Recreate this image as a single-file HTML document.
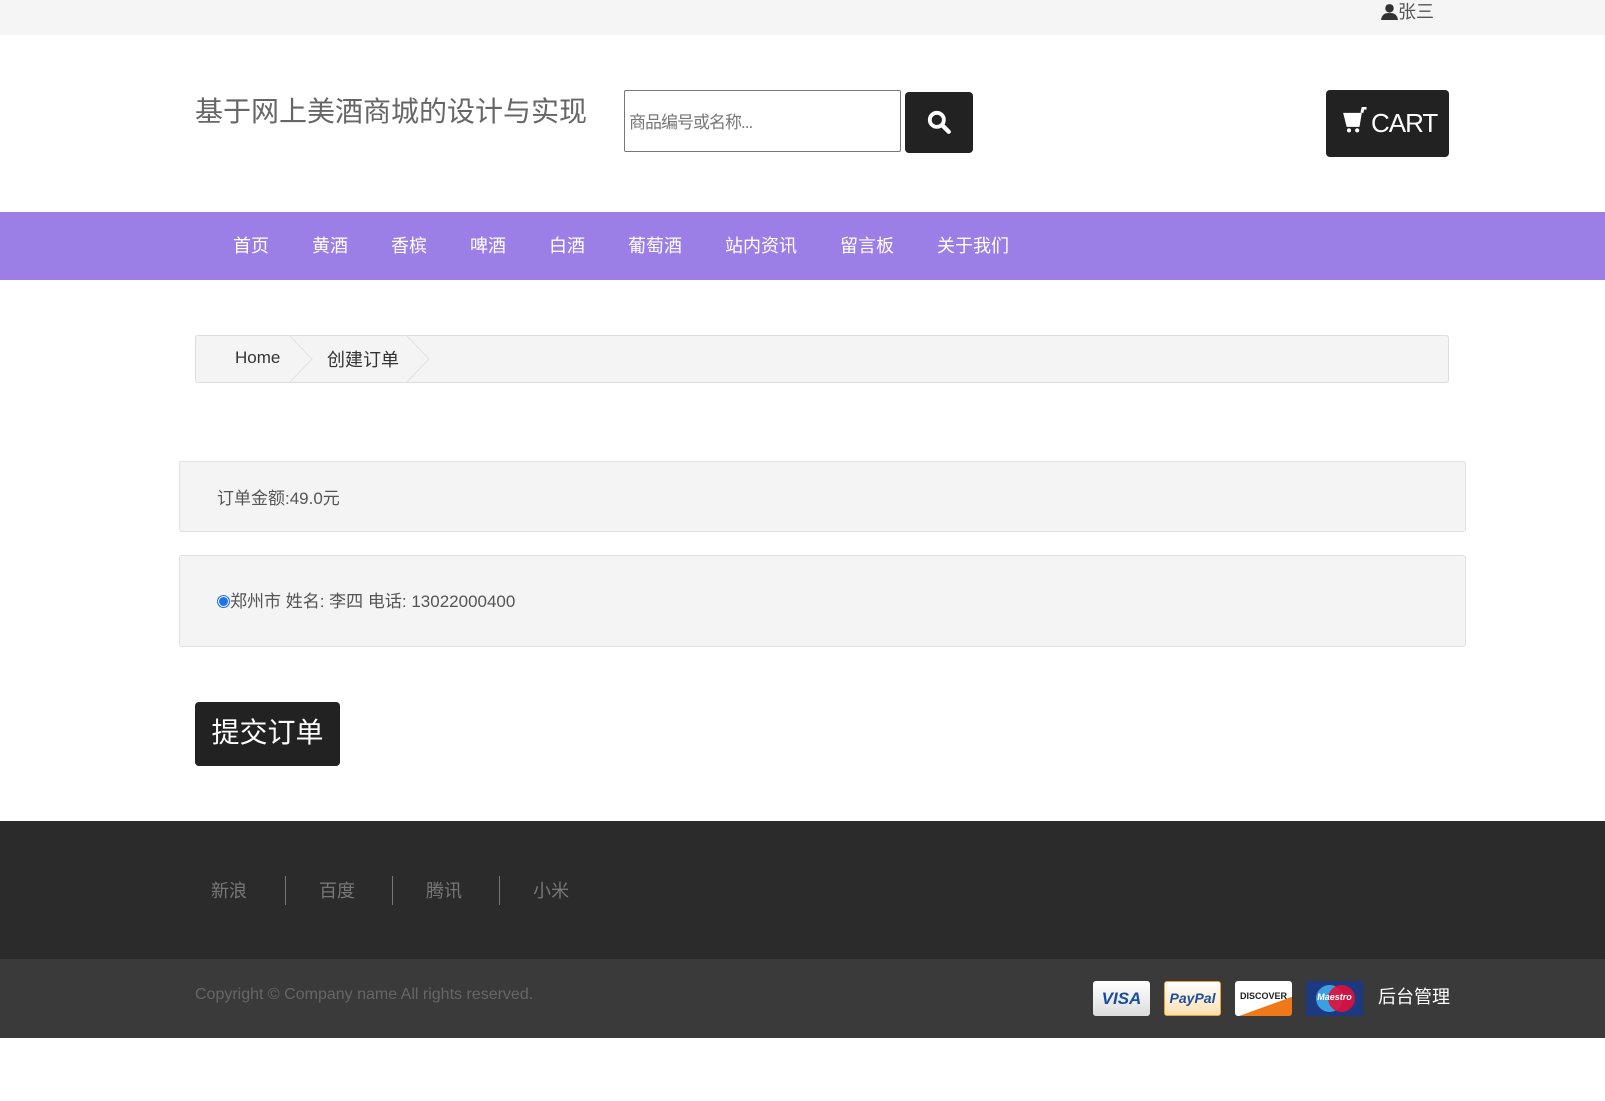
<!DOCTYPE html>
<html><head><meta charset="utf-8"><style>
*{margin:0;padding:0;box-sizing:border-box}
body{width:1605px;height:1101px;position:relative;background:#fff;font-family:"Liberation Sans","Noto Sans CJK SC",sans-serif;overflow:hidden}
.a{position:absolute}
</style></head><body>
<div class="a" style="left:0;top:0;width:1605px;height:35px;background:#f5f5f5"></div>
<div class="a" style="left:1381px;top:1px;font-size:18px;color:#555;line-height:22px">
<svg width="17" height="17" viewBox="0 0 16 16" style="vertical-align:-2px"><circle cx="8" cy="5" r="4" fill="#333"/><path d="M0 16 Q1 9 8 9.5 Q15 9 16 16Z" fill="#333"/></svg>张三</div>

<div class="a" style="left:195px;top:90px;font-size:28px;color:#666;letter-spacing:0">基于网上美酒商城的设计与实现</div>
<div class="a" style="left:624px;top:90px;width:277px;height:62px;border:1px solid #777;border-radius:2px;font-size:17px;color:#777;padding:17px 4px;letter-spacing:-1px">商品编号或名称...</div>
<div class="a" style="left:905px;top:92px;width:68px;height:61px;background:#222;border-radius:4px">
<svg width="26" height="26" viewBox="0 0 24 24" style="position:absolute;left:21px;top:17px"><circle cx="10" cy="10" r="6.5" fill="none" stroke="#fff" stroke-width="3.5"/><path d="M15 15 L21 21" stroke="#fff" stroke-width="4" stroke-linecap="round"/></svg></div>
<div class="a" style="left:1326px;top:90px;width:123px;height:67px;background:#222;border-radius:4px;color:#fff;font-size:26px">
<svg width="28" height="28" viewBox="0 0 24 24" style="position:absolute;left:16px;top:17px"><path d="M1 5 H17 L15 17 H4Z" fill="#fff"/><path d="M17 5 L18 1 H21" stroke="#fff" stroke-width="2.5" fill="none"/><circle cx="6" cy="20" r="1.8" fill="#fff"/><circle cx="13" cy="20" r="1.8" fill="#fff"/></svg>
<span style="position:absolute;left:45px;top:18px;letter-spacing:-1px">CART</span></div>

<div class="a" style="left:0;top:212px;width:1605px;height:68px;background:#9b7fe6"></div>
<div class="a" style="left:233px;top:232px;font-size:18px;color:#fff;white-space:nowrap;word-spacing:0">
<span style="margin-right:43px">首页</span><span style="margin-right:43px">黄酒</span><span style="margin-right:43px">香槟</span><span style="margin-right:43px">啤酒</span><span style="margin-right:43px">白酒</span><span style="margin-right:43px">葡萄酒</span><span style="margin-right:43px">站内资讯</span><span style="margin-right:43px">留言板</span><span>关于我们</span></div>

<div class="a" style="left:195px;top:335px;width:1254px;height:48px;background:#f4f4f4;border:1px solid #ddd;border-radius:3px"></div>
<svg class="a" style="left:285px;top:335px" width="150" height="48"><path d="M4 0 L27 24 L4 48" fill="none" stroke="#e2e2e2"/><path d="M121 0 L144 24 L121 48" fill="none" stroke="#e2e2e2"/></svg>
<div class="a" style="left:235px;top:348px;font-size:17px;color:#333">Home</div>
<div class="a" style="left:327px;top:346px;font-size:18px;color:#333">创建订单</div>

<div class="a" style="left:179px;top:461px;width:1287px;height:71px;background:#f4f4f4;border:1px solid #e0e0e0;border-radius:3px"></div>
<div class="a" style="left:217px;top:484px;font-size:17px;color:#555">订单金额:49.0元</div>
<div class="a" style="left:179px;top:555px;width:1287px;height:92px;background:#f4f4f4;border:1px solid #e0e0e0;border-radius:3px"></div>
<div class="a" style="left:217px;top:587px;font-size:17px;color:#555"><span style="display:inline-block;width:13px;height:13px;border-radius:50%;border:1px solid #1a73e8;background:#1a73e8;box-shadow:inset 0 0 0 1px #fff;vertical-align:-1px"></span>郑州市 姓名: 李四 电话: 13022000400</div>

<div class="a" style="left:195px;top:702px;width:145px;height:64px;background:#222;border-radius:4px;color:#fff;font-size:28px;text-align:center;line-height:62px">提交订单</div>

<div class="a" style="left:0;top:821px;width:1605px;height:138px;background:#2b2b2b"></div>
<div class="a" style="left:211px;top:877px;font-size:18px;color:#777">新浪</div>
<div class="a" style="left:319px;top:877px;font-size:18px;color:#777">百度</div>
<div class="a" style="left:426px;top:877px;font-size:18px;color:#777">腾讯</div>
<div class="a" style="left:533px;top:877px;font-size:18px;color:#777">小米</div>
<div class="a" style="left:285px;top:876px;width:1px;height:29px;background:#777"></div>
<div class="a" style="left:392px;top:876px;width:1px;height:29px;background:#777"></div>
<div class="a" style="left:499px;top:876px;width:1px;height:29px;background:#777"></div>

<div class="a" style="left:0;top:959px;width:1605px;height:79px;background:#3a3a3a"></div>
<div class="a" style="left:195px;top:986px;font-size:16px;color:#666">Copyright © Company name All rights reserved.</div>
<div class="a" style="left:1093px;top:981px;width:57px;height:35px;background:linear-gradient(#fff,#ddd);border-radius:3px;color:#1a4d9a;font:italic bold 17px 'Liberation Sans';text-align:center;line-height:35px">VISA</div>
<div class="a" style="left:1164px;top:981px;width:57px;height:35px;background:linear-gradient(#fff,#fde0b0);border:1px solid #f0a030;border-radius:3px;color:#1d4fa0;font:italic bold 14px 'Liberation Sans';text-align:center;line-height:33px">PayPal</div>
<div class="a" style="left:1235px;top:981px;width:57px;height:35px;background:linear-gradient(160deg,#fff 65%,#f07818 66%);border-radius:3px;color:#222;font:bold 9px 'Liberation Sans';text-align:center;line-height:30px">DISCOVER</div>
<div class="a" style="left:1306px;top:981px;width:57px;height:35px;background:#1d3a80;border-radius:2px">
<div class="a" style="left:10px;top:4px;width:27px;height:27px;border-radius:50%;background:#3aa0e0"></div>
<div class="a" style="left:22px;top:4px;width:27px;height:27px;border-radius:50%;background:#e0103a;opacity:.9"></div>
<div class="a" style="left:0;top:11px;width:57px;text-align:center;color:#fff;font:italic bold 9px 'Liberation Sans'">Maestro</div></div>
<div class="a" style="left:1378px;top:983px;font-size:18px;color:#fff">后台管理</div>
</body></html>
